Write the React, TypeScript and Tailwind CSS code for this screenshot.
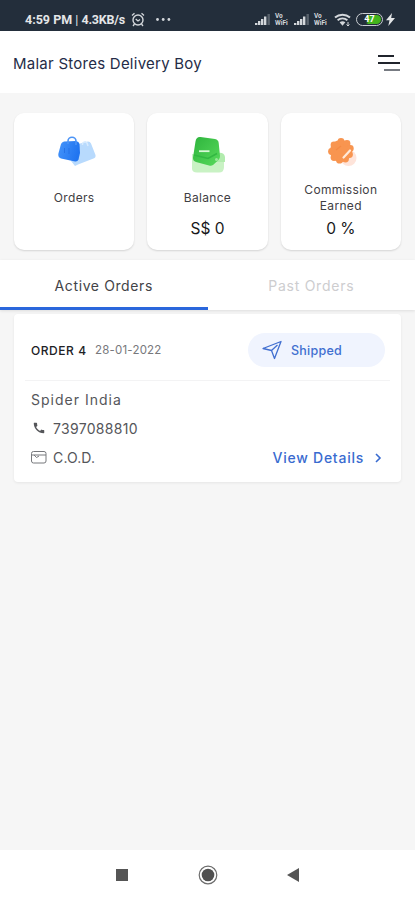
import { MdCall } from "react-icons/md";
import clsx from "clsx";
import type { ReactNode } from "react";

const SignalIcon = () => (
  <svg width="17" height="12" viewBox="0 0 17 12">
    <path
      d="M0 11h2.4v-2H0zM3 11h2.4V7H3zM6 11h2.4V5H6zM9 11h2.4V2.5H9z"
      fill="#d3d7db"
    />
    <path d="M12.5 11h2.4V0h-2.4z" fill="#59626c" />
  </svg>
);

const VoWifi = () => (
  <span className="flex flex-col text-[6.5px] leading-[7px] font-bold text-[#d3d7db]">
    <span>Vo</span>
    <span>WiFi</span>
  </span>
);

const StatusBar = () => (
  <div className="flex h-[31px] flex-none items-center bg-[#232e3b] pt-[8px] pr-[20px] pl-[25px] font-['Roboto',sans-serif] text-[#e4e6e8]">
    <span className="w-[106px] text-[12.5px] leading-4 font-bold whitespace-nowrap">
      4:59 PM <span className="font-normal">|</span>{" "}
      <span className="tracking-[-0.2px]">4.3KB/s</span>
    </span>
    <svg width="14" height="15" viewBox="0 0 14 15" fill="none" stroke="#d3d7db">
      <circle cx="7" cy="8" r="5" strokeWidth="1.4" />
      <path
        d="M1 3.5 3.5 1.2M13 3.5 10.5 1.2M3.5 12 2 14M10.5 12l1.5 2M4.7 7 7 9l2-1.5"
        strokeWidth="1.3"
      />
    </svg>
    <svg width="15" height="3" viewBox="0 0 15 3" fill="#d3d7db" className="ml-[11px]">
      <circle cx="1.5" cy="1.5" r="1.4" />
      <circle cx="7.2" cy="1.5" r="1.4" />
      <circle cx="12.9" cy="1.5" r="1.4" />
    </svg>
    <div className="ml-auto flex items-center">
      <SignalIcon />
      <div className="ml-[3px] w-[19px]">
        <VoWifi />
      </div>
      <SignalIcon />
      <div className="ml-[3px] w-[20px]">
        <VoWifi />
      </div>
      <svg width="18" height="14" viewBox="0 0 18 14" fill="none" stroke="#d3d7db">
        <path d="M1 4.6a11.3 11.3 0 0 1 15 0" strokeWidth="2" />
        <path d="M3.6 7.3a7.6 7.6 0 0 1 9.8 0" strokeWidth="1.8" />
        <path d="M5.6 9.2a5 5 0 0 1 5.8 0L8.5 12.8z" fill="#d3d7db" stroke="none" />
        <path d="M14 9v4M12.5 11.5l1.5 1.5 1.5-1.5" strokeWidth="1" />
      </svg>
      <div className="ml-[4px] flex h-[13px] w-[27px] items-center rounded-full border-[1.5px] border-[#c9cdd1] p-[1px]">
        <div className="flex h-full w-full items-center justify-center rounded-full bg-[linear-gradient(90deg,#232e3b_35%,#43b51c_45%,#43b51c_100%)] text-[9px] font-bold text-white">
          47
        </div>
      </div>
      <svg width="9" height="13" viewBox="0 0 9 13" className="ml-[3px]">
        <path d="M6 0 0 7.3h3.5L2.3 13 9 5H5.2z" fill="#e4e6e8" />
      </svg>
    </div>
  </div>
);

const Header = () => (
  <header className="flex h-[62px] flex-none items-center justify-between bg-white pr-[15px] pl-[13px]">
    <h1 className="mt-[3px] text-[15px] leading-5 tracking-[0.25px] text-[#252c48]">
      Malar Stores Delivery Boy
    </h1>
    <div className="mt-[1px] flex w-[22px] flex-col gap-[5px]">
      <span className="h-[2px] w-[16px] bg-[#20242c]" />
      <span className="h-[2px] w-[22px] bg-[#20242c]" />
      <span className="h-[2px] w-[16px] self-end bg-[#777b82]" />
    </div>
  </header>
);

const BagsIcon = () => (
  <svg width="40" height="32" viewBox="0 0 40 32" className="ml-[5px]">
    <defs>
      <linearGradient id="bag" x1="0" y1="0" x2="1" y2="0.3">
        <stop offset="0" stopColor="#4594fa" />
        <stop offset="1" stopColor="#2175f0" />
      </linearGradient>
    </defs>
    <path
      d="M21 8 31 5.5q2.2 0 3 2L38.5 19q.5 2.500-2 3.500L21 28.500 18 30l-4-5z"
      fill="#b8dafd"
    />
    <path d="M25.5 9V7.500q2-3 4.500-.5l1 3" fill="none" stroke="#d8ebfe" strokeWidth="1.5" />
    <path
      d="M7 5.500 19 5q3 .4 3.500 3L23 17l-1.500 6.500q-1 2.500-3.500 2L4 22.500Q1 21.500 1.300 18L4 8q.7-2 3-2.500z"
      fill="url(#bag)"
    />
    <path d="M11 8V5.200a4 4 0 0 1 8 0V9" fill="none" stroke="#4c94f6" strokeWidth="1.6" />
    <path d="M7.5 12v5M12 12v6" stroke="#2673e8" />
  </svg>
);

const WalletIcon = () => (
  <svg width="36" height="40" viewBox="0 0 36 40" className="ml-[4px]">
    <defs>
      <linearGradient id="wallet" x1="0" y1="0" x2="1" y2="1">
        <stop offset="0" stopColor="#2eb43d" />
        <stop offset="1" stopColor="#58da5c" />
      </linearGradient>
    </defs>
    <path d="M1 18 27 18l6 2v11q0 5.500-5 5.500H6q-5 0-5-4z" fill="#c9f2c4" />
    <path d="M27 17q6-1 7 4v5h-9z" fill="#b2ecae" />
    <path
      d="M9.500 1 24 3q3.500.8 3.700 4L29 20q.4 2.700-2 4.500L22 29q-1.700 1.300-4 .5L5 26Q1.700 25 2 21.500L4.500 5.500Q5.200.5 9.500 1z"
      fill="url(#wallet)"
    />
    <path d="M3 19 17 22.500l9-5" fill="none" stroke="#32b842" strokeWidth="1.5" />
    <path d="M8 15.200h10.500" fill="none" stroke="#d8f8d6" strokeWidth="1.8" />
    <circle cx="25.5" cy="23.500" r="1.5" fill="#9ae79a" />
  </svg>
);

const CommissionIcon = () => (
  <svg width="32" height="32" viewBox="0 0 32 32" className="ml-[2px]">
    <circle cx="22.5" cy="22" r="8" fill="#fee4da" />
    <g fill="#f89550">
      <circle cx="15" cy="15" r="11" />
      <circle cx="15" cy="5.5" r="3.4" />
      <circle cx="21" cy="7.5" r="3.4" />
      <circle cx="24.3" cy="12.5" r="3.4" />
      <circle cx="23.5" cy="18.5" r="3.4" />
      <circle cx="19.5" cy="23" r="3.4" />
      <circle cx="13.5" cy="24.2" r="3.4" />
      <circle cx="8" cy="21.5" r="3.4" />
      <circle cx="5.5" cy="15.5" r="3.4" />
      <circle cx="8" cy="9" r="3.4" />
    </g>
    <path d="m17.500 21.500 6.500-7" stroke="#ffe9d8" strokeWidth="2.2" strokeLinecap="round" />
    <path d="m10 14 5-4" stroke="#f58b45" strokeWidth="1.5" />
  </svg>
);

type StatCardProps = {
  icon: ReactNode;
  label: string;
  value?: string;
};

const StatCard = ({ icon, label, value }: StatCardProps) => (
  <div className="flex h-[137px] flex-col items-center rounded-[10px] bg-white shadow-[0_1px_2px_rgba(0,0,0,0.14)]">
    <div className="mt-[23px] flex h-[40px] items-start justify-center">{icon}</div>
    <div className="flex h-[44px] w-[90px] items-center justify-center text-center text-[12px] leading-4 tracking-[0.32px] text-[#3f4044]">
      {label}
    </div>
    {value && <div className="text-[15.5px] leading-[17px] text-[#17181a]">{value}</div>}
  </div>
);

const Tabs = () => (
  <div className="flex h-[50px] flex-none bg-white shadow-[0_1px_3px_rgba(0,0,0,0.1)]">
    {["Active Orders", "Past Orders"].map((tab, i) => (
      <button
        key={tab}
        className={clsx(
          "w-[208px] border-b-[3px] pt-[3px] text-[14px]",
          i === 0
            ? "border-[#2a67dc] tracking-[0.6px] text-[#424347]"
            : "border-transparent tracking-[0.75px] text-[#cdcdcf]",
        )}
      >
        {tab}
      </button>
    ))}
  </div>
);

const OrderCard = () => (
  <article className="mx-[14px] mt-[4px] h-[168px] rounded-[4px] bg-white px-[11px] shadow-[0_1px_3px_rgba(0,0,0,0.07)]">
    <div className="flex h-[67px] items-center border-b border-[#f3f3f4] pt-[6px] pr-[5px] pl-[6px]">
      <span className="mt-px w-[64px] text-[12px] font-medium tracking-[0.55px] whitespace-nowrap text-[#202125]">
        ORDER 4
      </span>
      <span className="mt-px text-[11.5px] tracking-[0.2px] text-[#77787c]">28-01-2022</span>
      <div className="ml-auto flex h-[34px] w-[137px] items-center rounded-full bg-[#f0f4fe] pl-[14px] text-[#416fd0]">
        <svg
          width="20"
          height="20"
          viewBox="0 0 20 20"
          fill="none"
          stroke="currentColor"
          strokeWidth="1.3"
          strokeLinejoin="round"
        >
          <path d="M1 8.500 19 1.500 12.500 18.500 9.500 10.500z" />
          <path d="m9.500 10.500 6-5.500" />
        </svg>
        <span className="mt-[2px] ml-[9px] text-[12.5px] font-medium tracking-[0.25px]">
          Shipped
        </span>
      </div>
    </div>
    <div className="flex flex-col pt-[4px] pl-[6px] text-[14px] text-[#55565a]">
      <div className="h-[29px] leading-[30px] tracking-[1px]">Spider India</div>
      <div className="flex h-[29px] items-center">
        <MdCall className="mr-[7px] mb-[2px] ml-[1px] h-[14px] w-[14px]" />
        <span className="tracking-[0.3px]">7397088810</span>
      </div>
      <div className="flex h-[29px] items-center">
        <svg width="16" height="13" viewBox="0 0 16 13" fill="none" stroke="#77787c">
          <rect x=".5" y=".5" width="14.5" height="11.5" rx="2" />
          <path d="M.5 4h14.500M3 4l2.500 2.500L8 5" />
        </svg>
        <span className="ml-[6px] tracking-[0.15px]">C.O.D.</span>
        <button className="ml-auto flex items-center pr-[8px] font-medium tracking-[0.75px] text-[#396bd0]">
          View Details
          <svg
            width="7"
            height="10"
            viewBox="0 0 7 10"
            fill="none"
            stroke="currentColor"
            strokeWidth="1.6"
            className="ml-[11px]"
          >
            <path d="m1 1 4 4-4 4" />
          </svg>
        </button>
      </div>
    </div>
  </article>
);

const NavBar = () => (
  <nav className="flex h-[50px] flex-none items-center justify-between bg-white px-[116px]">
    <span className="h-[12px] w-[12px] bg-[#555]" />
    <svg width="20" height="20" viewBox="0 0 20 20">
      <circle cx="10" cy="10" r="8.8" fill="none" stroke="#6c6c6c" strokeWidth="1.2" />
      <circle cx="10" cy="10" r="6.3" fill="#505050" />
    </svg>
    <svg width="12" height="14" viewBox="0 0 12 14">
      <path d="M12 0v14L0 7z" fill="#555" />
    </svg>
  </nav>
);

const App = () => {
  return (
    <div className="flex h-screen flex-col overflow-hidden bg-[#f6f6f6] font-['Inter','Open_Sans',sans-serif]">
      <StatusBar />
      <Header />
      <main className="flex-1">
        <section className="grid grid-cols-3 gap-[13px] px-[14px] pt-[20px] pb-[10px]">
          <StatCard icon={<BagsIcon />} label="Orders" />
          <StatCard icon={<WalletIcon />} label="Balance" value="S$ 0" />
          <StatCard icon={<CommissionIcon />} label="Commission Earned" value="0 %" />
        </section>
        <Tabs />
        <OrderCard />
      </main>
      <NavBar />
    </div>
  );
};

export default App;
